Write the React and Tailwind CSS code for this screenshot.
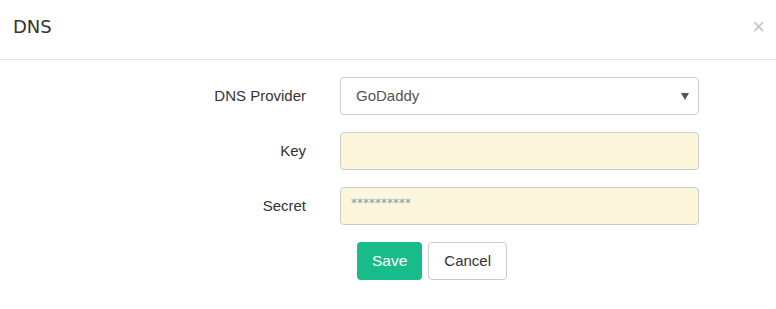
import React from "react";

const Row = ({ label, children }) => (
  <div className="flex items-center">
    <div className="w-[306px] text-right text-[15px] text-[#333]">{label}</div>
    <div className="ml-[34px] w-[359px]">{children}</div>
  </div>
);

const App = () => {
  return (
    <div
      className="w-[776px] h-[309px] bg-white"
      style={{ fontFamily: '"Liberation Sans", Arial, sans-serif' }}
    >
      {/* Header */}
      <div className="h-[60px] flex items-center justify-between border-b border-[#e5e5e5] pl-[13px] pr-[11px]">
        <h4
          className="text-[18px] text-[#333] -mt-[7px]"
          style={{ fontFamily: '"DejaVu Sans", sans-serif' }}
        >
          DNS
        </h4>
        <button className="text-[22px] leading-none text-[#c4c4c4] -mt-[6px]">
          ×
        </button>
      </div>

      {/* Form */}
      <div className="pt-[17px] flex flex-col gap-[17px]">
        <Row label="DNS Provider">
          <div className="relative h-[38px] border border-[#ccc] rounded bg-white flex items-center pl-[15px] text-[15px] text-[#555]">
            GoDaddy
            <span className="absolute right-[9px] top-[15px] w-0 h-0 border-l-[4px] border-r-[4px] border-t-[7px] border-l-transparent border-r-transparent border-t-[#555]" />
          </div>
        </Row>
        <Row label="Key">
          <input
            type="text"
            className="w-full h-[38px] border border-[#ccc] rounded bg-[#fcf6dc] px-[10px] text-[15px] outline-none"
          />
        </Row>
        <Row label="Secret">
          <input
            type="text"
            placeholder="**********"
            className="w-full h-[38px] border border-[#ccc] rounded bg-[#fcf6dc] px-[10px] text-[12px] outline-none placeholder:text-[#999] pb-[6px]"
            style={{ fontFamily: '"DejaVu Sans", sans-serif' }}
          />
        </Row>
      </div>

      {/* Buttons */}
      <div className="flex gap-[6px] pl-[357px] pt-[17px]">
        <button className="h-[38px] px-[15px] rounded bg-[#18bc8a] text-white text-[15.5px]">
          Save
        </button>
        <button className="h-[38px] px-[15px] rounded border border-[#ccc] bg-white text-[#333] text-[15px]">
          Cancel
        </button>
      </div>
    </div>
  );
};

export default App;
